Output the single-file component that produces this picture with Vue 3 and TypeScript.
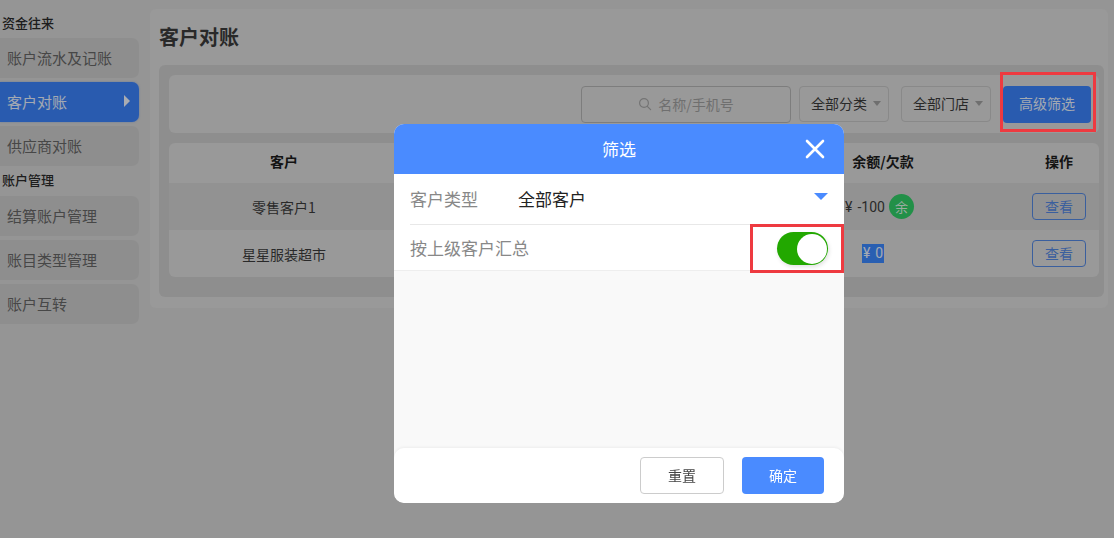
<template>
  <div class="page">
    <aside class="sidebar">
      <template v-for="group in menuGroups" :key="group.title">
        <div class="group-title">{{ group.title }}</div>
        <div
          v-for="item in group.items"
          :key="item"
          class="menu-item"
          :class="{ active: item === activeItem }"
        >
          <span>{{ item }}</span>
          <i v-if="item === activeItem" class="menu-arrow"></i>
        </div>
      </template>
    </aside>

    <main class="main">
      <h1 class="heading">客户对账</h1>
      <section class="panel">
        <div class="toolbar">
          <div class="search">
            <svg class="search-icon" viewBox="0 0 14 14" width="14" height="14">
              <circle cx="6" cy="6" r="4.4" fill="none" stroke="#a6a6a6" stroke-width="1.2" />
              <path d="M9.3 9.3 L12.6 12.6" stroke="#a6a6a6" stroke-width="1.2" stroke-linecap="round" />
            </svg>
            <span>名称/手机号</span>
          </div>
          <div class="dropdown">全部分类<i class="caret"></i></div>
          <div class="dropdown">全部门店<i class="caret"></i></div>
          <button class="advanced">高级筛选</button>
        </div>

        <div class="table">
          <div class="row head">
            <div>客户</div>
            <div></div>
            <div>余额/欠款</div>
            <div>操作</div>
          </div>
          <div v-for="row in rows" :key="row.name" class="row body" :class="{ odd: row.odd }">
            <div>{{ row.name }}</div>
            <div></div>
            <div class="balance" :class="{ zero: !row.badge }">
              <span class="amount" :class="{ selected: !row.badge }"><span class="yen">¥</span>{{ row.amount }}</span>
              <span v-if="row.badge" class="badge">余</span>
            </div>
            <div><button class="view">查看</button></div>
          </div>
        </div>
      </section>
    </main>

    <div class="overlay">
      <div class="mark mark-filter"></div>
      <div class="dialog">
        <header class="dialog-head">
          <span>筛选</span>
          <svg class="close" viewBox="0 0 20 20" width="20" height="20">
            <path d="M2 2 L18 18 M18 2 L2 18" stroke="#fff" stroke-width="2.6" stroke-linecap="round" />
          </svg>
        </header>
        <div class="dialog-body">
          <div class="field field-type">
            <span class="field-label">客户类型</span>
            <span class="field-value">全部客户</span>
            <i class="field-caret"></i>
          </div>
          <div class="field field-switch">
            <span class="field-label">按上级客户汇总</span>
            <div class="switch"><i class="knob"></i></div>
            <div class="mark mark-switch"></div>
          </div>
        </div>
        <footer class="dialog-foot">
          <button class="btn-reset">重置</button>
          <button class="btn-ok">确定</button>
        </footer>
      </div>
    </div>
  </div>
</template>

<script setup lang="ts">
const activeItem = '客户对账'

const menuGroups = [
  { title: '资金往来', items: ['账户流水及记账', '客户对账', '供应商对账'] },
  { title: '账户管理', items: ['结算账户管理', '账目类型管理', '账户互转'] }
]

const rows = [
  { name: '零售客户1', amount: '-100', badge: true, odd: true },
  { name: '星星服装超市', amount: '0', badge: false, odd: false }
]
</script>

<style>
html,
body {
  margin: 0;
  overflow: hidden;
}
</style>

<style scoped>
.page {
  display: flex;
  align-items: flex-start;
  width: 1114px;
  height: 538px;
  padding-top: 9px;
  box-sizing: border-box;
  background: #d6d6d6;
  font-family: "Noto Sans CJK SC", "Liberation Sans", sans-serif;
  color: #3c3c3c;
  overflow: hidden;
}

.sidebar {
  width: 139px;
  flex-shrink: 0;
  margin-right: 11px;
  padding-top: 4px;
}

.group-title {
  height: 20px;
  margin-bottom: 5px;
  line-height: 20px;
  padding-left: 2px;
  font-size: 13px;
  font-weight: 500;
  color: #2a2a2a;
}

.menu-item + .group-title {
  margin-top: 1px;
  margin-bottom: 6px;
}

.menu-item {
  display: flex;
  align-items: center;
  justify-content: space-between;
  height: 40px;
  margin-bottom: 4px;
  padding: 0 9px 2px 7px;
  box-sizing: border-box;
  background: #cccccc;
  border-radius: 0 7px 7px 0;
  font-size: 15px;
  color: #666;
}

.menu-item.active {
  background: #3c83fb;
  color: #eaf2ff;
  box-shadow: 0 0 2px rgba(60, 131, 251, 0.5);
}

.menu-arrow {
  width: 0;
  height: 0;
  border-left: 6px solid #f2f6ff;
  border-top: 6px solid transparent;
  border-bottom: 6px solid transparent;
}

.main {
  width: 958px;
  height: 299px;
  padding-left: 9px;
  box-sizing: border-box;
  background: #dbdbdb;
  border-radius: 6px;
}

.heading {
  height: 56px;
  margin: 0;
  line-height: 56px;
  font-size: 20px;
  font-weight: 700;
  color: #3c3c3c;
}

.panel {
  height: 232px;
  margin-right: 4px;
  padding: 10px 5px 0 10px;
  box-sizing: border-box;
  background: #cccccc;
  border-radius: 6px;
}

.toolbar {
  display: flex;
  align-items: center;
  justify-content: flex-end;
  height: 58px;
  padding-right: 8px;
  box-sizing: border-box;
  background: #dbdbdb;
  border-radius: 6px;
}

.search {
  display: flex;
  align-items: center;
  justify-content: center;
  gap: 6px;
  width: 210px;
  height: 37px;
  margin-right: 8px;
  box-sizing: border-box;
  border: 1px solid #b4b4b4;
  border-radius: 4px;
  font-size: 14px;
  color: #a0a0a0;
}

.dropdown {
  display: flex;
  align-items: center;
  justify-content: center;
  gap: 6px;
  width: 90px;
  height: 36px;
  margin-right: 12px;
  padding: 0 0 2px 4px;
  box-sizing: border-box;
  border: 1px solid #c4c4c4;
  border-radius: 4px;
  font-size: 14px;
  color: #3c3c3c;
}

.caret {
  width: 0;
  height: 0;
  border-top: 5px solid #a0a0a0;
  border-left: 4.5px solid transparent;
  border-right: 4.5px solid transparent;
}

.advanced {
  width: 88px;
  height: 37px;
  padding: 0 0 2px;
  border: 0;
  border-radius: 4px;
  background: #3c83fb;
  color: #eaf2ff;
  font: inherit;
  font-size: 14px;
}

.table {
  margin-top: 10px;
  background: #dbdbdb;
  border-radius: 6px;
  overflow: hidden;
}

.row {
  display: grid;
  grid-template-columns: 230px 1fr 272px 80px;
  align-items: center;
  text-align: center;
  font-size: 14px;
}

.row.head {
  height: 40px;
  padding-bottom: 4px;
  box-sizing: border-box;
  font-weight: 700;
  color: #1c1c1c;
}

.row.body {
  height: 47px;
  color: #3c3c3c;
}

.row.odd {
  background: #d1d1d1;
}

.balance {
  display: flex;
  align-items: center;
  justify-content: center;
  gap: 4px;
  margin-left: -7px;
  font-family: Roboto, "Noto Sans CJK SC", sans-serif;
}

.balance.zero {
  margin-left: -20px;
}

.yen {
  margin-right: 5px;
}

.selected {
  padding: 0 1px;
  line-height: 19px;
  background: #3c89ff;
  color: #eaf2ff;
}

.badge {
  display: flex;
  align-items: center;
  justify-content: center;
  width: 25px;
  height: 25px;
  border-radius: 50%;
  background: #32ce68;
  color: #dff5e6;
  font-family: "Noto Sans CJK SC", sans-serif;
  font-size: 13px;
}

.view {
  width: 54px;
  height: 27px;
  padding: 0 0 2px;
  border: 1px solid #5488e2;
  border-radius: 4px;
  background: transparent;
  color: #5488e2;
  font: inherit;
  font-size: 14px;
}

.overlay {
  position: fixed;
  inset: 0;
  background: rgba(0, 0, 0, 0.3);
}

.mark {
  position: absolute;
  box-sizing: border-box;
  border: 3px solid #ee3a40;
}

.mark-filter {
  left: 1000px;
  top: 72px;
  width: 96px;
  height: 60px;
}

.mark-switch {
  left: 356px;
  top: -1px;
  width: 94px;
  height: 49px;
}

.dialog {
  position: absolute;
  left: 394px;
  top: 124px;
  display: flex;
  flex-direction: column;
  width: 450px;
  height: 379px;
  background: #f9f9f9;
  border-radius: 10px;
  overflow: hidden;
}

.dialog-head {
  position: relative;
  display: flex;
  align-items: center;
  justify-content: center;
  flex-shrink: 0;
  height: 50px;
  padding-bottom: 2px;
  box-sizing: border-box;
  background: #4a8bff;
  color: #fff;
  font-size: 17px;
}

.close {
  position: absolute;
  right: 19px;
  top: 15px;
}

.dialog-body {
  flex: 1;
  position: relative;
}

.field {
  position: relative;
  display: flex;
  align-items: center;
  padding-left: 16px;
  background: #fff;
  font-size: 17px;
}

.field-type {
  height: 51px;
  padding-bottom: 2px;
  box-sizing: border-box;
}

.field-type::after {
  content: "";
  position: absolute;
  left: 16px;
  right: 0;
  bottom: 0;
  height: 1px;
  background: #e8e8e8;
}

.field-switch {
  height: 46px;
  border-bottom: 1px solid #eee;
  box-sizing: border-box;
}

.field-label {
  color: #888;
}

.field-value {
  margin-left: 40px;
  color: #222;
}

.field-caret {
  position: absolute;
  right: 16px;
  top: 19px;
  width: 0;
  height: 0;
  border-top: 7px solid #4a8bff;
  border-left: 7px solid transparent;
  border-right: 7px solid transparent;
}

.switch {
  position: absolute;
  left: 383px;
  top: 7px;
  width: 51px;
  height: 33px;
  box-sizing: border-box;
  padding: 1px;
  display: flex;
  justify-content: flex-end;
  background: #22a800;
  border-radius: 17px;
  box-shadow: 1px 2px 4px rgba(0, 0, 0, 0.12);
}

.knob {
  width: 30px;
  height: 30px;
  margin-top: 0.5px;
  border-radius: 50%;
  background: #fff;
}

.dialog-foot {
  display: flex;
  align-items: center;
  justify-content: flex-end;
  gap: 18px;
  flex-shrink: 0;
  height: 55px;
  padding-right: 20px;
  box-sizing: border-box;
  background: #fff;
  border-radius: 10px;
  box-shadow: 0 -1px 3px rgba(0, 0, 0, 0.05);
}

.dialog-foot button {
  height: 37px;
  padding: 0 0 2px;
  border-radius: 4px;
  font: inherit;
  font-size: 14px;
}

.btn-reset {
  width: 84px;
  border: 1px solid #ccc;
  background: #fff;
  color: #444;
}

.btn-ok {
  width: 82px;
  border: 0;
  background: #4a8bff;
  color: #fff;
}
</style>
